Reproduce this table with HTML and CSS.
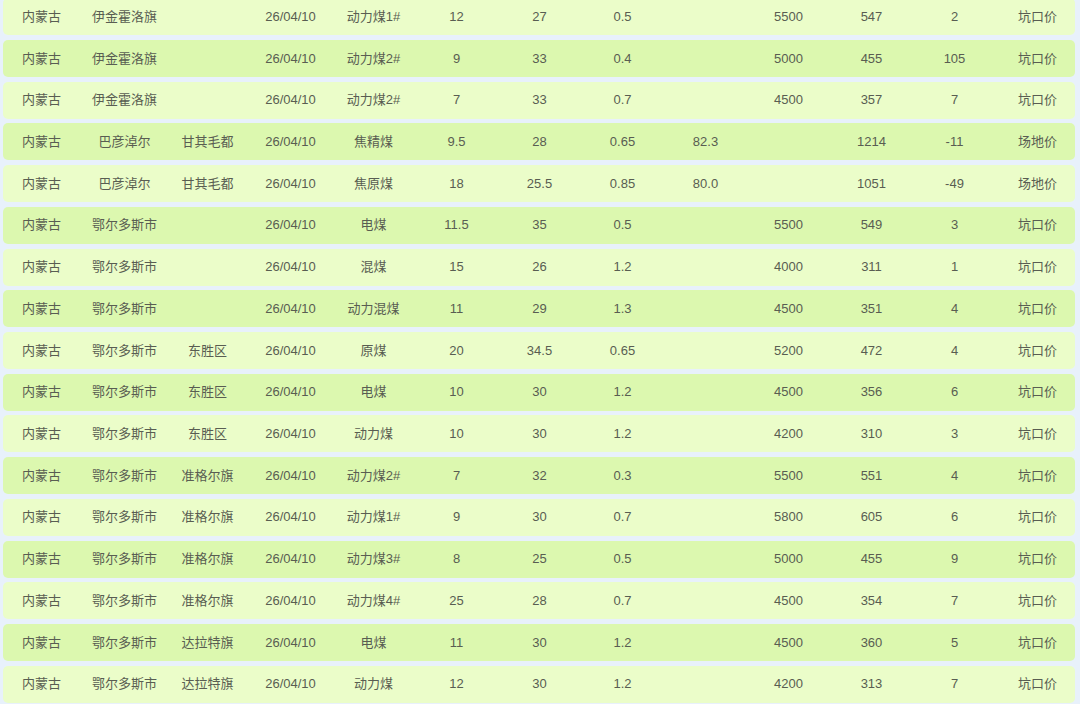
FILE: index.html
```html
<!DOCTYPE html>
<html lang="zh">
<head>
<meta charset="utf-8">
<link rel="stylesheet" href="styles.css">
</head>
<body>
<div class="table">
  <div class="row odd"><div class="cells"><span>内蒙古</span><span>伊金霍洛旗</span><span></span><span>26/04/10</span><span>动力煤1#</span><span>12</span><span>27</span><span>0.5</span><span></span><span>5500</span><span>547</span><span>2</span><span>坑口价</span></div></div>
  <div class="row even"><div class="cells"><span>内蒙古</span><span>伊金霍洛旗</span><span></span><span>26/04/10</span><span>动力煤2#</span><span>9</span><span>33</span><span>0.4</span><span></span><span>5000</span><span>455</span><span>105</span><span>坑口价</span></div></div>
  <div class="row odd"><div class="cells"><span>内蒙古</span><span>伊金霍洛旗</span><span></span><span>26/04/10</span><span>动力煤2#</span><span>7</span><span>33</span><span>0.7</span><span></span><span>4500</span><span>357</span><span>7</span><span>坑口价</span></div></div>
  <div class="row even"><div class="cells"><span>内蒙古</span><span>巴彦淖尔</span><span>甘其毛都</span><span>26/04/10</span><span>焦精煤</span><span>9.5</span><span>28</span><span>0.65</span><span>82.3</span><span></span><span>1214</span><span>-11</span><span>场地价</span></div></div>
  <div class="row odd"><div class="cells"><span>内蒙古</span><span>巴彦淖尔</span><span>甘其毛都</span><span>26/04/10</span><span>焦原煤</span><span>18</span><span>25.5</span><span>0.85</span><span>80.0</span><span></span><span>1051</span><span>-49</span><span>场地价</span></div></div>
  <div class="row even"><div class="cells"><span>内蒙古</span><span>鄂尔多斯市</span><span></span><span>26/04/10</span><span>电煤</span><span>11.5</span><span>35</span><span>0.5</span><span></span><span>5500</span><span>549</span><span>3</span><span>坑口价</span></div></div>
  <div class="row odd"><div class="cells"><span>内蒙古</span><span>鄂尔多斯市</span><span></span><span>26/04/10</span><span>混煤</span><span>15</span><span>26</span><span>1.2</span><span></span><span>4000</span><span>311</span><span>1</span><span>坑口价</span></div></div>
  <div class="row even"><div class="cells"><span>内蒙古</span><span>鄂尔多斯市</span><span></span><span>26/04/10</span><span>动力混煤</span><span>11</span><span>29</span><span>1.3</span><span></span><span>4500</span><span>351</span><span>4</span><span>坑口价</span></div></div>
  <div class="row odd"><div class="cells"><span>内蒙古</span><span>鄂尔多斯市</span><span>东胜区</span><span>26/04/10</span><span>原煤</span><span>20</span><span>34.5</span><span>0.65</span><span></span><span>5200</span><span>472</span><span>4</span><span>坑口价</span></div></div>
  <div class="row even"><div class="cells"><span>内蒙古</span><span>鄂尔多斯市</span><span>东胜区</span><span>26/04/10</span><span>电煤</span><span>10</span><span>30</span><span>1.2</span><span></span><span>4500</span><span>356</span><span>6</span><span>坑口价</span></div></div>
  <div class="row odd"><div class="cells"><span>内蒙古</span><span>鄂尔多斯市</span><span>东胜区</span><span>26/04/10</span><span>动力煤</span><span>10</span><span>30</span><span>1.2</span><span></span><span>4200</span><span>310</span><span>3</span><span>坑口价</span></div></div>
  <div class="row even"><div class="cells"><span>内蒙古</span><span>鄂尔多斯市</span><span>准格尔旗</span><span>26/04/10</span><span>动力煤2#</span><span>7</span><span>32</span><span>0.3</span><span></span><span>5500</span><span>551</span><span>4</span><span>坑口价</span></div></div>
  <div class="row odd"><div class="cells"><span>内蒙古</span><span>鄂尔多斯市</span><span>准格尔旗</span><span>26/04/10</span><span>动力煤1#</span><span>9</span><span>30</span><span>0.7</span><span></span><span>5800</span><span>605</span><span>6</span><span>坑口价</span></div></div>
  <div class="row even"><div class="cells"><span>内蒙古</span><span>鄂尔多斯市</span><span>准格尔旗</span><span>26/04/10</span><span>动力煤3#</span><span>8</span><span>25</span><span>0.5</span><span></span><span>5000</span><span>455</span><span>9</span><span>坑口价</span></div></div>
  <div class="row odd"><div class="cells"><span>内蒙古</span><span>鄂尔多斯市</span><span>准格尔旗</span><span>26/04/10</span><span>动力煤4#</span><span>25</span><span>28</span><span>0.7</span><span></span><span>4500</span><span>354</span><span>7</span><span>坑口价</span></div></div>
  <div class="row even"><div class="cells"><span>内蒙古</span><span>鄂尔多斯市</span><span>达拉特旗</span><span>26/04/10</span><span>电煤</span><span>11</span><span>30</span><span>1.2</span><span></span><span>4500</span><span>360</span><span>5</span><span>坑口价</span></div></div>
  <div class="row odd"><div class="cells"><span>内蒙古</span><span>鄂尔多斯市</span><span>达拉特旗</span><span>26/04/10</span><span>动力煤</span><span>12</span><span>30</span><span>1.2</span><span></span><span>4200</span><span>313</span><span>7</span><span>坑口价</span></div></div>
</div>
</body>
</html>
```

FILE: styles.css
```css
html, body {
  margin: 0;
  padding: 0;
  background: #e8f1fb;
  overflow: hidden;
}
body {
  width: 1080px;
  height: 704px;
  font-family: "Liberation Sans", "Noto Sans CJK SC", sans-serif;
  font-size: 13px;
  color: #595d52;
}
.table {
  display: flex;
  flex-direction: column;
  gap: 4.73px;
  margin-top: -1.73px;
  padding: 0 5px 0 3px;
}
.row {
  height: 37px;
  border-radius: 5px;
  display: flex;
  align-items: center;
}
.odd {
  background: #ebfdc9;
}
.even {
  background: #dcf8af;
}
.cells {
  display: grid;
  grid-template-columns: repeat(13, 83px);
  align-items: center;
  margin-left: -3px;
  width: 1079px;
}
.cells span {
  display: block;
  height: 18px;
  line-height: 18px;
  text-align: center;
  white-space: nowrap;
}
```
